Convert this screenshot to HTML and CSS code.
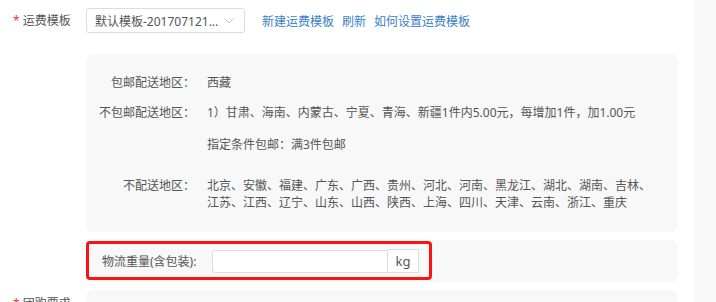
FILE: index.html
```html
<!DOCTYPE html>
<html lang="zh-CN">
<head>
<meta charset="utf-8">
<title>运费模板</title>
<link rel="stylesheet" href="styles.css">
</head>
<body>
<div class="page">
  <div class="main">
    <div class="row-top">
      <div class="label"><span class="star">*</span>运费模板</div>
      <div class="select">
        <span class="select-text">默认模板-201707121...</span>
        <svg class="chev" width="10" height="6" viewBox="0 0 10 6"><path d="M0.5 0.5 L5 5 L9.5 0.5" fill="none" stroke="#c8c8c8" stroke-width="1"/></svg>
      </div>
      <div class="links">
        <a class="link">新建运费模板</a>
        <a class="link">刷新</a>
        <a class="link">如何设置运费模板</a>
      </div>
    </div>

    <div class="panel info">
      <div class="irow r1">
        <div class="ilabel">包邮配送地区：</div>
        <div class="ival">西藏</div>
      </div>
      <div class="irow r2">
        <div class="ilabel">不包邮配送地区：</div>
        <div class="ival">1）甘肃、海南、内蒙古、宁夏、青海、新疆1件内5.00元，每增加1件，加1.00元</div>
      </div>
      <div class="irow r3">
        <div class="ilabel"></div>
        <div class="ival">指定条件包邮：满3件包邮</div>
      </div>
      <div class="irow r4">
        <div class="ilabel">不配送地区：</div>
        <div class="ival wrap">北京、安徽、福建、广东、广西、贵州、河北、河南、黑龙江、湖北、湖南、吉林、江苏、江西、辽宁、山东、山西、陕西、上海、四川、天津、云南、浙江、重庆</div>
      </div>
    </div>

    <div class="panel weight">
      <div class="wlabel">物流重量(含包装):</div>
      <div class="winput"></div>
      <div class="unit">kg</div>
      <div class="highlight"></div>
    </div>

    <div class="row-bottom">
      <div class="label low"><span class="star">*</span>团购要求</div>
      <div class="panel next"></div>
    </div>
  </div>
  <div class="side"></div>
</div>
</body>
</html>
```
FILE: styles.css
```css
html, body {
  margin: 0;
  padding: 0;
  background: #ffffff;
}
body {
  font-family: "Noto Sans", "Noto Sans CJK SC", sans-serif;
  font-size: 12px;
  color: #555555;
}
.page {
  display: flex;
  width: 716px;
  height: 302px;
  overflow: hidden;
}
.main {
  width: 694px;
  flex: none;
}
.side {
  flex: 1;
  background: #f9f9f9;
}
.row-top {
  display: flex;
  align-items: center;
  padding-top: 8px;
  height: 25px;
}
.label {
  width: 73px;
  padding-left: 13px;
  flex: none;
  line-height: 18px;
  color: #555;
}
.star {
  color: #e4393c;
  margin-right: 3px;
}
.select {
  display: flex;
  align-items: center;
  justify-content: space-between;
  padding: 0 10px 0 8px;
  box-sizing: border-box;
  width: 159px;
  height: 25px;
  border: 1px solid #dcdcdc;
  border-radius: 3px;
  background: #fff;
}
.select-text {
  color: #555;
  white-space: nowrap;
}
.chev {
  display: block;
}
.links {
  display: flex;
  gap: 8px;
  margin-left: 17px;
}
.link {
  color: #3a7fc6;
  cursor: pointer;
}
.panel {
  background: #f8f8f8;
  border-radius: 8px;
  margin-left: 86px;
  width: 592px;
}
.info {
  margin-top: 21px;
  padding: 20px 0 20px 0;
  box-sizing: border-box;
  height: 178px;
}
.irow {
  display: flex;
  line-height: 18px;
}
.r2 { margin-top: 12px; }
.r3 { margin-top: 14px; }
.r4 { margin-top: 23px; line-height: 17px; }
.ilabel {
  width: 109px;
  flex: none;
  text-align: right;
  color: #555;
  white-space: nowrap;
}
.ival {
  margin-left: 12px;
  color: #555;
  white-space: nowrap;
}
.ival.wrap {
  white-space: normal;
  width: 450px;
}
.weight {
  position: relative;
  margin-top: 8px;
  height: 42px;
  display: flex;
  align-items: center;
}
.wlabel {
  margin-left: 16px;
  width: 110px;
  flex: none;
  color: #555;
  white-space: nowrap;
}
.winput {
  width: 176px;
  height: 23px;
  box-sizing: border-box;
  border: 1px solid #dcdcdc;
  border-radius: 3px 0 0 3px;
  background: #fff;
}
.unit {
  width: 31px;
  height: 24px;
  box-sizing: border-box;
  border: 1px solid #dcdcdc;
  border-left: none;
  background: #fff;
  display: flex;
  align-items: center;
  justify-content: center;
  color: #555;
  font-size: 13px;
}
.highlight {
  position: absolute;
  left: 0;
  top: 1px;
  width: 346px;
  height: 39px;
  box-sizing: border-box;
  border: 3px solid #fb1313;
  border-radius: 4px;
  pointer-events: none;
}
.row-bottom {
  display: flex;
  margin-top: 8px;
}
.label.low {
  padding-top: 5px;
}
.next {
  margin-left: 0;
  height: 40px;
}
```
